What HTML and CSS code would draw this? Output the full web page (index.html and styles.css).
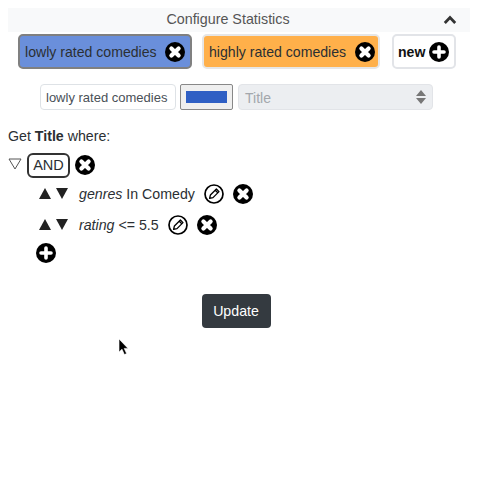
FILE: index.html
```html
<!DOCTYPE html>
<html lang="en">
<head>
<meta charset="utf-8">
<title>Configure Statistics</title>
<link rel="stylesheet" href="styles.css">
</head>
<body>
<svg class="defs" width="0" height="0" aria-hidden="true">
  <symbol id="x" viewBox="0 0 20 20">
    <circle cx="10" cy="10" r="10" fill="#000"/>
    <path d="M6.4 6.4 13.6 13.6M13.6 6.4 6.4 13.6" stroke="#fff" stroke-width="4.2" stroke-linecap="round"/>
  </symbol>
  <symbol id="plus" viewBox="0 0 20 20">
    <circle cx="10" cy="10" r="10" fill="#000"/>
    <path d="M10 5V15M5 10H15" stroke="#fff" stroke-width="3.6" stroke-linecap="round"/>
  </symbol>
  <symbol id="edit" viewBox="0 0 20 20">
    <circle cx="10" cy="10" r="9" fill="#fff" stroke="#000" stroke-width="1.7"/>
    <path d="M5.6 14.4 6.4 11 12.4 5 15 7.6 9 13.6ZM11.2 6.2 13.8 8.8" fill="none" stroke="#000" stroke-width="1.3" stroke-linejoin="round"/>
  </symbol>
  <symbol id="up" viewBox="0 0 12 11"><path d="M6 0 12 11H0Z" fill="#222"/></symbol>
  <symbol id="down" viewBox="0 0 12 11"><path d="M0 0H12L6 11Z" fill="#222"/></symbol>
</svg>
<main class="panel">
  <header class="head">
    <span class="head-title">Configure Statistics</span>
    <svg class="chevron" viewBox="0 0 14 10" width="14" height="10"><path d="M1.8 8 7 2.6 12.2 8" fill="none" stroke="#333" stroke-width="2.8"/></svg>
  </header>
  <nav class="tabs">
    <button class="tab tab-blue">lowly rated comedies<svg class="ic"><use href="#x"/></svg></button>
    <button class="tab tab-orange">highly rated comedies<svg class="ic"><use href="#x"/></svg></button>
    <button class="tab tab-new">new<svg class="ic"><use href="#plus"/></svg></button>
  </nav>
  <div class="form-row">
    <input class="name" type="text" value="lowly rated comedies">
    <span class="swatch"><span class="swatch-fill"></span></span>
    <span class="select"><span class="select-text">Title</span>
      <svg viewBox="0 0 10 14" width="10" height="14"><path d="M0 6 5 0 10 6ZM0 8 5 14 10 8Z" fill="#777"/></svg>
    </span>
  </div>
  <p class="get">Get <b>Title</b> where:</p>
  <div class="and-row">
    <svg class="tri" viewBox="0 0 14 12" width="14" height="12"><path d="M1 1H13L7 11Z" fill="#fff" stroke="#555" stroke-width="1"/></svg>
    <span class="and">AND</span>
    <svg class="ic"><use href="#x"/></svg>
  </div>
  <div class="rule">
    <span class="arrows"><svg class="arrow"><use href="#up"/></svg><svg class="arrow"><use href="#down"/></svg></span>
    <span class="rule-text"><i>genres</i> In Comedy</span>
    <svg class="ic"><use href="#edit"/></svg>
    <svg class="ic"><use href="#x"/></svg>
  </div>
  <div class="rule">
    <span class="arrows"><svg class="arrow"><use href="#up"/></svg><svg class="arrow"><use href="#down"/></svg></span>
    <span class="rule-text"><i>rating</i> &lt;= 5.5</span>
    <svg class="ic"><use href="#edit"/></svg>
    <svg class="ic"><use href="#x"/></svg>
  </div>
  <div class="add"><svg class="ic"><use href="#plus"/></svg></div>
  <div class="actions"><button class="update">Update</button></div>
</main>
<svg class="cursor" viewBox="0 0 12 18" width="12" height="18"><path d="M1 1V14L4 11.2 6.4 16.6 8.6 15.6 6.2 10.4H10Z" fill="#000" stroke="#fff" stroke-width=".6"/></svg>
</body>
</html>
```
FILE: styles.css
```css
* { box-sizing: border-box; }
html, body { margin: 0; height: 100%; background: #fff; }
body { font-family: "Liberation Sans", Arial, sans-serif; color: #2b2f33; font-size: 14.2px; overflow: hidden; position: relative; }
.defs { position: absolute; }
.panel { padding: 8px 10px 0 8px; }
.head { height: 24px; background: #f8f9fa; position: relative; display: flex; align-items: center; justify-content: center; padding: 0 22px 2px 0; }
.head-title { font-size: 14.3px; color: #555; }
.chevron { position: absolute; right: 13px; top: 7px; }
.tabs { display: flex; margin: 2px 0 0 10px; }
.tab { height: 35px; border-radius: 5px; border: 2px solid #e2e4e8; font: 14.1px "Liberation Sans", Arial, sans-serif; color: #2b2f33; display: flex; align-items: center; justify-content: space-between; padding: 0 5px; white-space: nowrap; flex: none; }
.tab-blue { width: 174px; background: #6a8fdb; border-color: #808080; margin-right: 10px; }
.tab-orange { width: 178px; background: #ffb04a; border-color: #e6e6e6; margin-right: 12px; padding-right: 3px; }
.tab-new { width: 64px; background: #fff; font-weight: 700; padding: 0 5px 0 4px; color: #111; }
.ic { width: 20px; height: 20px; flex: none; }
.form-row { display: flex; gap: 4px; margin: 15px 0 0 32px; height: 26px; }
.name { width: 136px; height: 26px; border: 1px solid #dee2e6; border-radius: 4px; padding: 0 5px; font: 13px "Liberation Sans", Arial, sans-serif; color: #495057; background: #fff; outline: none; }
.swatch { width: 53px; height: 26px; border: 1px solid #888; background: #efefef; padding: 6px 5px; border-radius: 2px; margin-right: 1px; }
.swatch-fill { display: block; height: 100%; background: #2f5fc4; }
.select { width: 195px; height: 26px; background: #eceef1; border: 1px solid #e2e4e8; border-radius: 4px; color: #a3a7ac; display: flex; align-items: center; justify-content: space-between; padding: 0 6px; font-size: 14px; }
.select-text { padding-top: 2px; }
.get { margin: 17px 0 0; line-height: 18px; }
.and-row { display: flex; align-items: center; margin-top: 7px; height: 26px; }
.tri { margin-right: 5px; margin-top: -3px; }
.and { width: 43px; height: 25px; border: 2px solid #333; border-radius: 6px; text-align: center; line-height: 21px; margin-right: 5px; font-size: 14.5px; }
.rule { display: flex; align-items: center; height: 31px; margin: 0 0 0 31px; }
.arrows { width: 40px; display: flex; gap: 5px; }
.arrow { width: 12px; height: 11px; flex: none; margin-top: -1px; }
.rule-text { margin-right: 9px; }
.rule .ic + .ic { margin-left: 9px; }
.add { margin: 3px 0 0 28px; height: 20px; }
.actions { display: flex; justify-content: center; margin-top: 31px; padding-right: 6px; }
.update { width: 69px; height: 34px; background: #343a40; color: #fff; border: 0; border-radius: 4px; font: 14.2px "Liberation Sans", Arial, sans-serif; }
.cursor { position: absolute; left: 118px; top: 338px; }
```
